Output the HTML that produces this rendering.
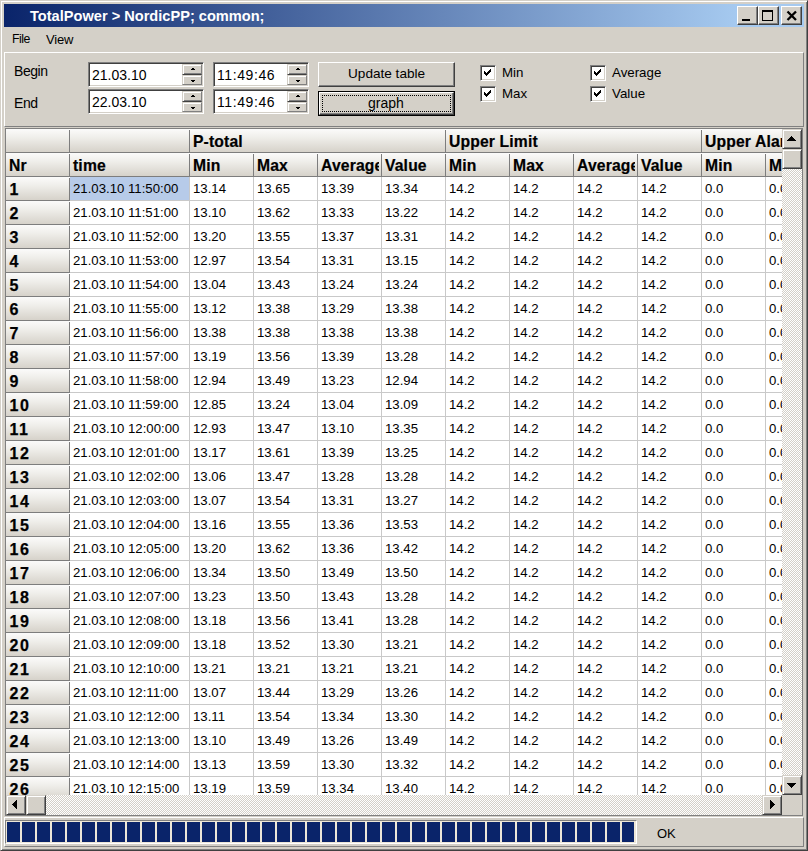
<!DOCTYPE html><html><head><meta charset="utf-8"><style>
*{margin:0;padding:0;box-sizing:border-box}
html,body{width:808px;height:851px;overflow:hidden;background:#d4d0c8;font-family:"Liberation Sans",sans-serif;color:#000}
.a{position:absolute}
.t{position:absolute;white-space:pre;line-height:1}
.fx{position:absolute;background:linear-gradient(#fbfbfa,#f0efeb 35%,#d6d2ca)}
.dl{position:absolute;background:#c9c9c9}
.fl{position:absolute;background:#7d7d7d}
.btn{position:absolute;background:#d4d0c8;border-style:solid;border-width:1px;border-color:#fff #404040 #404040 #fff;box-shadow:inset -1px -1px #808080}
.sbb{position:absolute;background:#d4d0c8;border-style:solid;border-width:1px;border-color:#d4d0c8 #404040 #404040 #d4d0c8;box-shadow:inset 1px 1px #fff,inset -1px -1px #808080}
.chk{position:absolute;width:16px;height:16px;background:#fff;border-style:solid;border-width:1px;border-color:#808080 #fff #fff #808080;box-shadow:inset 1px 1px #404040,inset -1px -1px #d4d0c8}
.ed{position:absolute;background:#fff;border-style:solid;border-width:1px;border-color:#808080 #fff #fff #808080;box-shadow:inset 1px 1px #404040,inset -1px -1px #d4d0c8}
.spn{position:absolute;background:#d4d0c8;border-style:solid;border-width:1px;border-color:#fff #404040 #404040 #fff;box-shadow:inset -1px -1px #808080}
</style></head><body><div class="a" style="left:0;top:0;width:808px;height:851px;border-style:solid;border-width:1px;border-color:#d4d0c8 #404040 #404040 #d4d0c8;box-shadow:inset 1px 1px #fff,inset -1px -1px #808080"></div>
<div class="a" style="left:4px;top:4px;width:800px;height:23px;background:linear-gradient(to right,#0a246a,#a6caf0 92%)"></div>
<div class="t" style="left:30px;top:9.2px;font-size:14.6px;font-weight:bold;color:#fff">TotalPower &gt; NordicPP; common;</div>
<div class="btn" style="left:737px;top:6px;width:21px;height:19px"></div>
<div class="btn" style="left:758px;top:6px;width:21px;height:19px"></div>
<div class="btn" style="left:781px;top:6px;width:21px;height:19px"></div>
<div class="a" style="left:742px;top:19px;width:8px;height:2px;background:#000"></div>
<div class="a" style="left:762px;top:10px;width:11px;height:11px;border:1px solid #000;border-top-width:2px"></div>
<svg class="a" style="left:786px;top:10px" width="12" height="12" viewBox="0 0 12 12"><path d="M1.5 1.5L10 10M10 1.5L1.5 10" stroke="#000" stroke-width="2.3" fill="none"/></svg>
<div class="t" style="left:12px;top:33px;font-size:12.3px;letter-spacing:-0.5px">File</div>
<div class="t" style="left:46px;top:33px;font-size:13px;letter-spacing:-0.2px">View</div>
<div class="a" style="left:4px;top:52px;width:800px;height:75px;border-style:solid;border-width:1px;border-color:#fff #808080 #808080 #fff"></div>
<div class="t" style="left:14px;top:63.7px;font-size:14px;letter-spacing:-0.45px">Begin</div>
<div class="t" style="left:14px;top:95.7px;font-size:14px;letter-spacing:-0.45px">End</div>
<div class="ed" style="left:88px;top:62px;width:116px;height:25px"></div>
<div class="t" style="left:92px;top:68px;font-size:14px">21.03.10</div>
<div class="a" style="left:182px;top:64px;width:20px;height:11px;background:#d4d0c8;border-style:solid;border-width:1px;border-color:#d4d0c8 #808080 #404040 #d4d0c8;box-shadow:inset 1px 1px #fff,inset 0 -1px #808080"></div>
<div class="a" style="left:182px;top:75px;width:20px;height:10px;background:#d4d0c8;border-style:solid;border-width:1px;border-color:#d4d0c8 #808080 #808080 #d4d0c8;box-shadow:inset 1px 1px #fff"></div>
<div class="a" style="left:192px;top:68px;width:2px;height:1px;background:#000"></div><div class="a" style="left:191px;top:69px;width:4px;height:1px;background:#000"></div>
<div class="a" style="left:191px;top:80px;width:4px;height:1px;background:#000"></div><div class="a" style="left:192px;top:81px;width:2px;height:1px;background:#000"></div>
<div class="ed" style="left:213px;top:62px;width:96px;height:25px"></div>
<div class="t" style="left:217px;top:68px;font-size:14px;letter-spacing:0.6px">11:49:46</div>
<div class="a" style="left:287px;top:64px;width:20px;height:11px;background:#d4d0c8;border-style:solid;border-width:1px;border-color:#d4d0c8 #808080 #404040 #d4d0c8;box-shadow:inset 1px 1px #fff,inset 0 -1px #808080"></div>
<div class="a" style="left:287px;top:75px;width:20px;height:10px;background:#d4d0c8;border-style:solid;border-width:1px;border-color:#d4d0c8 #808080 #808080 #d4d0c8;box-shadow:inset 1px 1px #fff"></div>
<div class="a" style="left:297px;top:68px;width:2px;height:1px;background:#000"></div><div class="a" style="left:296px;top:69px;width:4px;height:1px;background:#000"></div>
<div class="a" style="left:296px;top:80px;width:4px;height:1px;background:#000"></div><div class="a" style="left:297px;top:81px;width:2px;height:1px;background:#000"></div>
<div class="ed" style="left:88px;top:89px;width:116px;height:25px"></div>
<div class="t" style="left:92px;top:95px;font-size:14px">22.03.10</div>
<div class="a" style="left:182px;top:91px;width:20px;height:11px;background:#d4d0c8;border-style:solid;border-width:1px;border-color:#d4d0c8 #808080 #404040 #d4d0c8;box-shadow:inset 1px 1px #fff,inset 0 -1px #808080"></div>
<div class="a" style="left:182px;top:102px;width:20px;height:10px;background:#d4d0c8;border-style:solid;border-width:1px;border-color:#d4d0c8 #808080 #808080 #d4d0c8;box-shadow:inset 1px 1px #fff"></div>
<div class="a" style="left:192px;top:95px;width:2px;height:1px;background:#000"></div><div class="a" style="left:191px;top:96px;width:4px;height:1px;background:#000"></div>
<div class="a" style="left:191px;top:107px;width:4px;height:1px;background:#000"></div><div class="a" style="left:192px;top:108px;width:2px;height:1px;background:#000"></div>
<div class="ed" style="left:213px;top:89px;width:96px;height:25px"></div>
<div class="t" style="left:217px;top:95px;font-size:14px;letter-spacing:0.6px">11:49:46</div>
<div class="a" style="left:287px;top:91px;width:20px;height:11px;background:#d4d0c8;border-style:solid;border-width:1px;border-color:#d4d0c8 #808080 #404040 #d4d0c8;box-shadow:inset 1px 1px #fff,inset 0 -1px #808080"></div>
<div class="a" style="left:287px;top:102px;width:20px;height:10px;background:#d4d0c8;border-style:solid;border-width:1px;border-color:#d4d0c8 #808080 #808080 #d4d0c8;box-shadow:inset 1px 1px #fff"></div>
<div class="a" style="left:297px;top:95px;width:2px;height:1px;background:#000"></div><div class="a" style="left:296px;top:96px;width:4px;height:1px;background:#000"></div>
<div class="a" style="left:296px;top:107px;width:4px;height:1px;background:#000"></div><div class="a" style="left:297px;top:108px;width:2px;height:1px;background:#000"></div>
<div class="btn" style="left:318px;top:62px;width:137px;height:25px"></div>
<div class="t" style="left:348px;top:67px;font-size:13.6px">Update table</div>
<div class="a" style="left:318px;top:91px;width:137px;height:25px;background:#d4d0c8;border:1px solid #000"></div>
<div class="btn" style="left:319px;top:92px;width:135px;height:23px"></div>
<div class="a" style="left:322px;top:95px;width:129px;height:17px;border:1px dotted #000"></div>
<div class="t" style="left:368px;top:96px;font-size:14px">graph</div>
<div class="chk" style="left:480px;top:65px"></div>
<div class="a" style="left:484px;top:71px;width:1px;height:3px;background:#000"></div><div class="a" style="left:485px;top:72px;width:1px;height:3px;background:#000"></div><div class="a" style="left:486px;top:73px;width:1px;height:3px;background:#000"></div><div class="a" style="left:487px;top:72px;width:1px;height:3px;background:#000"></div><div class="a" style="left:488px;top:71px;width:1px;height:3px;background:#000"></div><div class="a" style="left:489px;top:70px;width:1px;height:3px;background:#000"></div><div class="a" style="left:490px;top:69px;width:1px;height:3px;background:#000"></div>
<div class="t" style="left:502px;top:66px;font-size:13.3px">Min</div>
<div class="chk" style="left:480px;top:86px"></div>
<div class="a" style="left:484px;top:92px;width:1px;height:3px;background:#000"></div><div class="a" style="left:485px;top:93px;width:1px;height:3px;background:#000"></div><div class="a" style="left:486px;top:94px;width:1px;height:3px;background:#000"></div><div class="a" style="left:487px;top:93px;width:1px;height:3px;background:#000"></div><div class="a" style="left:488px;top:92px;width:1px;height:3px;background:#000"></div><div class="a" style="left:489px;top:91px;width:1px;height:3px;background:#000"></div><div class="a" style="left:490px;top:90px;width:1px;height:3px;background:#000"></div>
<div class="t" style="left:502px;top:87px;font-size:13.3px">Max</div>
<div class="chk" style="left:590px;top:65px"></div>
<div class="a" style="left:594px;top:71px;width:1px;height:3px;background:#000"></div><div class="a" style="left:595px;top:72px;width:1px;height:3px;background:#000"></div><div class="a" style="left:596px;top:73px;width:1px;height:3px;background:#000"></div><div class="a" style="left:597px;top:72px;width:1px;height:3px;background:#000"></div><div class="a" style="left:598px;top:71px;width:1px;height:3px;background:#000"></div><div class="a" style="left:599px;top:70px;width:1px;height:3px;background:#000"></div><div class="a" style="left:600px;top:69px;width:1px;height:3px;background:#000"></div>
<div class="t" style="left:612px;top:66px;font-size:13.3px">Average</div>
<div class="chk" style="left:590px;top:86px"></div>
<div class="a" style="left:594px;top:92px;width:1px;height:3px;background:#000"></div><div class="a" style="left:595px;top:93px;width:1px;height:3px;background:#000"></div><div class="a" style="left:596px;top:94px;width:1px;height:3px;background:#000"></div><div class="a" style="left:597px;top:93px;width:1px;height:3px;background:#000"></div><div class="a" style="left:598px;top:92px;width:1px;height:3px;background:#000"></div><div class="a" style="left:599px;top:91px;width:1px;height:3px;background:#000"></div><div class="a" style="left:600px;top:90px;width:1px;height:3px;background:#000"></div>
<div class="t" style="left:612px;top:87px;font-size:13.3px">Value</div>
<div class="a" style="left:5px;top:128px;width:798px;height:688px;border:1px solid #808080;background:#fff"></div>
<div class="a" style="left:6px;top:129px;width:776px;height:666px;overflow:hidden"><div class="fx" style="left:0px;top:24px;width:63px;height:23px"></div><div class="fx" style="left:64px;top:24px;width:119px;height:23px"></div><div class="fx" style="left:184px;top:24px;width:63px;height:23px"></div><div class="fx" style="left:248px;top:24px;width:63px;height:23px"></div><div class="fx" style="left:312px;top:24px;width:63px;height:23px"></div><div class="fx" style="left:376px;top:24px;width:63px;height:23px"></div><div class="fx" style="left:440px;top:24px;width:63px;height:23px"></div><div class="fx" style="left:504px;top:24px;width:63px;height:23px"></div><div class="fx" style="left:568px;top:24px;width:63px;height:23px"></div><div class="fx" style="left:632px;top:24px;width:63px;height:23px"></div><div class="fx" style="left:696px;top:24px;width:63px;height:23px"></div><div class="fx" style="left:760px;top:24px;width:63px;height:23px"></div><div class="fx" style="left:0px;top:48px;width:63px;height:23px"></div><div class="a" style="left:64px;top:48px;width:119px;height:23px;background:#b7cbe9"></div><div class="fx" style="left:0px;top:72px;width:63px;height:23px"></div><div class="fx" style="left:0px;top:96px;width:63px;height:23px"></div><div class="fx" style="left:0px;top:120px;width:63px;height:23px"></div><div class="fx" style="left:0px;top:144px;width:63px;height:23px"></div><div class="fx" style="left:0px;top:168px;width:63px;height:23px"></div><div class="fx" style="left:0px;top:192px;width:63px;height:23px"></div><div class="fx" style="left:0px;top:216px;width:63px;height:23px"></div><div class="fx" style="left:0px;top:240px;width:63px;height:23px"></div><div class="fx" style="left:0px;top:264px;width:63px;height:23px"></div><div class="fx" style="left:0px;top:288px;width:63px;height:23px"></div><div class="fx" style="left:0px;top:312px;width:63px;height:23px"></div><div class="fx" style="left:0px;top:336px;width:63px;height:23px"></div><div class="fx" style="left:0px;top:360px;width:63px;height:23px"></div><div class="fx" style="left:0px;top:384px;width:63px;height:23px"></div><div class="fx" style="left:0px;top:408px;width:63px;height:23px"></div><div class="fx" style="left:0px;top:432px;width:63px;height:23px"></div><div class="fx" style="left:0px;top:456px;width:63px;height:23px"></div><div class="fx" style="left:0px;top:480px;width:63px;height:23px"></div><div class="fx" style="left:0px;top:504px;width:63px;height:23px"></div><div class="fx" style="left:0px;top:528px;width:63px;height:23px"></div><div class="fx" style="left:0px;top:552px;width:63px;height:23px"></div><div class="fx" style="left:0px;top:576px;width:63px;height:23px"></div><div class="fx" style="left:0px;top:600px;width:63px;height:23px"></div><div class="fx" style="left:0px;top:624px;width:63px;height:23px"></div><div class="fx" style="left:0px;top:648px;width:63px;height:23px"></div><div class="fx" style="left:0px;top:0px;width:63px;height:23px"></div><div class="fx" style="left:64px;top:0px;width:119px;height:23px"></div><div class="fx" style="left:184px;top:0px;width:255px;height:23px"></div><div class="fx" style="left:440px;top:0px;width:255px;height:23px"></div><div class="fx" style="left:696px;top:0px;width:127px;height:23px"></div><div class="fl" style="left:0;top:23px;width:796px;height:1px"></div><div class="fl" style="left:0;top:47px;width:796px;height:1px"></div><div class="fl" style="left:0;top:71px;width:64px;height:1px"></div><div class="dl" style="left:64px;top:71px;width:732px;height:1px"></div><div class="fl" style="left:0;top:95px;width:64px;height:1px"></div><div class="dl" style="left:64px;top:95px;width:732px;height:1px"></div><div class="fl" style="left:0;top:119px;width:64px;height:1px"></div><div class="dl" style="left:64px;top:119px;width:732px;height:1px"></div><div class="fl" style="left:0;top:143px;width:64px;height:1px"></div><div class="dl" style="left:64px;top:143px;width:732px;height:1px"></div><div class="fl" style="left:0;top:167px;width:64px;height:1px"></div><div class="dl" style="left:64px;top:167px;width:732px;height:1px"></div><div class="fl" style="left:0;top:191px;width:64px;height:1px"></div><div class="dl" style="left:64px;top:191px;width:732px;height:1px"></div><div class="fl" style="left:0;top:215px;width:64px;height:1px"></div><div class="dl" style="left:64px;top:215px;width:732px;height:1px"></div><div class="fl" style="left:0;top:239px;width:64px;height:1px"></div><div class="dl" style="left:64px;top:239px;width:732px;height:1px"></div><div class="fl" style="left:0;top:263px;width:64px;height:1px"></div><div class="dl" style="left:64px;top:263px;width:732px;height:1px"></div><div class="fl" style="left:0;top:287px;width:64px;height:1px"></div><div class="dl" style="left:64px;top:287px;width:732px;height:1px"></div><div class="fl" style="left:0;top:311px;width:64px;height:1px"></div><div class="dl" style="left:64px;top:311px;width:732px;height:1px"></div><div class="fl" style="left:0;top:335px;width:64px;height:1px"></div><div class="dl" style="left:64px;top:335px;width:732px;height:1px"></div><div class="fl" style="left:0;top:359px;width:64px;height:1px"></div><div class="dl" style="left:64px;top:359px;width:732px;height:1px"></div><div class="fl" style="left:0;top:383px;width:64px;height:1px"></div><div class="dl" style="left:64px;top:383px;width:732px;height:1px"></div><div class="fl" style="left:0;top:407px;width:64px;height:1px"></div><div class="dl" style="left:64px;top:407px;width:732px;height:1px"></div><div class="fl" style="left:0;top:431px;width:64px;height:1px"></div><div class="dl" style="left:64px;top:431px;width:732px;height:1px"></div><div class="fl" style="left:0;top:455px;width:64px;height:1px"></div><div class="dl" style="left:64px;top:455px;width:732px;height:1px"></div><div class="fl" style="left:0;top:479px;width:64px;height:1px"></div><div class="dl" style="left:64px;top:479px;width:732px;height:1px"></div><div class="fl" style="left:0;top:503px;width:64px;height:1px"></div><div class="dl" style="left:64px;top:503px;width:732px;height:1px"></div><div class="fl" style="left:0;top:527px;width:64px;height:1px"></div><div class="dl" style="left:64px;top:527px;width:732px;height:1px"></div><div class="fl" style="left:0;top:551px;width:64px;height:1px"></div><div class="dl" style="left:64px;top:551px;width:732px;height:1px"></div><div class="fl" style="left:0;top:575px;width:64px;height:1px"></div><div class="dl" style="left:64px;top:575px;width:732px;height:1px"></div><div class="fl" style="left:0;top:599px;width:64px;height:1px"></div><div class="dl" style="left:64px;top:599px;width:732px;height:1px"></div><div class="fl" style="left:0;top:623px;width:64px;height:1px"></div><div class="dl" style="left:64px;top:623px;width:732px;height:1px"></div><div class="fl" style="left:0;top:647px;width:64px;height:1px"></div><div class="dl" style="left:64px;top:647px;width:732px;height:1px"></div><div class="fl" style="left:0;top:671px;width:64px;height:1px"></div><div class="dl" style="left:64px;top:671px;width:732px;height:1px"></div><div class="fl" style="left:63px;top:1px;width:1px;height:23px"></div><div class="fl" style="left:63px;top:25px;width:1px;height:23px"></div><div class="fl" style="left:63px;top:49px;width:1px;height:23px"></div><div class="fl" style="left:63px;top:73px;width:1px;height:23px"></div><div class="fl" style="left:63px;top:97px;width:1px;height:23px"></div><div class="fl" style="left:63px;top:121px;width:1px;height:23px"></div><div class="fl" style="left:63px;top:145px;width:1px;height:23px"></div><div class="fl" style="left:63px;top:169px;width:1px;height:23px"></div><div class="fl" style="left:63px;top:193px;width:1px;height:23px"></div><div class="fl" style="left:63px;top:217px;width:1px;height:23px"></div><div class="fl" style="left:63px;top:241px;width:1px;height:23px"></div><div class="fl" style="left:63px;top:265px;width:1px;height:23px"></div><div class="fl" style="left:63px;top:289px;width:1px;height:23px"></div><div class="fl" style="left:63px;top:313px;width:1px;height:23px"></div><div class="fl" style="left:63px;top:337px;width:1px;height:23px"></div><div class="fl" style="left:63px;top:361px;width:1px;height:23px"></div><div class="fl" style="left:63px;top:385px;width:1px;height:23px"></div><div class="fl" style="left:63px;top:409px;width:1px;height:23px"></div><div class="fl" style="left:63px;top:433px;width:1px;height:23px"></div><div class="fl" style="left:63px;top:457px;width:1px;height:23px"></div><div class="fl" style="left:63px;top:481px;width:1px;height:23px"></div><div class="fl" style="left:63px;top:505px;width:1px;height:23px"></div><div class="fl" style="left:63px;top:529px;width:1px;height:23px"></div><div class="fl" style="left:63px;top:553px;width:1px;height:23px"></div><div class="fl" style="left:63px;top:577px;width:1px;height:23px"></div><div class="fl" style="left:63px;top:601px;width:1px;height:23px"></div><div class="fl" style="left:63px;top:625px;width:1px;height:23px"></div><div class="fl" style="left:63px;top:649px;width:1px;height:23px"></div><div class="fl" style="left:183px;top:1px;width:1px;height:22px"></div><div class="fl" style="left:183px;top:25px;width:1px;height:23px"></div><div class="dl" style="left:183px;top:48px;width:1px;height:640px"></div><div class="fl" style="left:247px;top:25px;width:1px;height:23px"></div><div class="dl" style="left:247px;top:48px;width:1px;height:640px"></div><div class="fl" style="left:311px;top:25px;width:1px;height:23px"></div><div class="dl" style="left:311px;top:48px;width:1px;height:640px"></div><div class="fl" style="left:375px;top:25px;width:1px;height:23px"></div><div class="dl" style="left:375px;top:48px;width:1px;height:640px"></div><div class="fl" style="left:439px;top:1px;width:1px;height:22px"></div><div class="fl" style="left:439px;top:25px;width:1px;height:23px"></div><div class="dl" style="left:439px;top:48px;width:1px;height:640px"></div><div class="fl" style="left:503px;top:25px;width:1px;height:23px"></div><div class="dl" style="left:503px;top:48px;width:1px;height:640px"></div><div class="fl" style="left:567px;top:25px;width:1px;height:23px"></div><div class="dl" style="left:567px;top:48px;width:1px;height:640px"></div><div class="fl" style="left:631px;top:25px;width:1px;height:23px"></div><div class="dl" style="left:631px;top:48px;width:1px;height:640px"></div><div class="fl" style="left:695px;top:1px;width:1px;height:22px"></div><div class="fl" style="left:695px;top:25px;width:1px;height:23px"></div><div class="dl" style="left:695px;top:48px;width:1px;height:640px"></div><div class="fl" style="left:759px;top:25px;width:1px;height:23px"></div><div class="dl" style="left:759px;top:48px;width:1px;height:640px"></div><div class="fl" style="left:823px;top:25px;width:1px;height:23px"></div><div class="dl" style="left:823px;top:48px;width:1px;height:640px"></div><div class="t" style="left:187px;top:4.9px;font-size:15.7px;letter-spacing:0.15px;font-weight:bold;-webkit-text-stroke:0.2px #000">P-total</div><div class="t" style="left:443px;top:4.9px;font-size:15.7px;letter-spacing:0.15px;font-weight:bold;-webkit-text-stroke:0.2px #000">Upper Limit</div><div class="t" style="left:699px;top:4.9px;font-size:15.7px;letter-spacing:0.15px;font-weight:bold;-webkit-text-stroke:0.2px #000">Upper Alarm</div><div class="t" style="left:0px;width:61px;overflow:hidden;padding-left:3px;top:28.9px;font-size:15.7px;letter-spacing:0.15px;font-weight:bold;-webkit-text-stroke:0.2px #000">Nr</div><div class="t" style="left:64px;width:117px;overflow:hidden;padding-left:3px;top:28.9px;font-size:15.7px;letter-spacing:0.15px;font-weight:bold;-webkit-text-stroke:0.2px #000">time</div><div class="t" style="left:184px;width:61px;overflow:hidden;padding-left:3px;top:28.9px;font-size:15.7px;letter-spacing:0.15px;font-weight:bold;-webkit-text-stroke:0.2px #000">Min</div><div class="t" style="left:248px;width:61px;overflow:hidden;padding-left:3px;top:28.9px;font-size:15.7px;letter-spacing:0.15px;font-weight:bold;-webkit-text-stroke:0.2px #000">Max</div><div class="t" style="left:312px;width:61px;overflow:hidden;padding-left:3px;top:28.9px;font-size:15.7px;letter-spacing:0.15px;font-weight:bold;-webkit-text-stroke:0.2px #000">Average</div><div class="t" style="left:376px;width:61px;overflow:hidden;padding-left:3px;top:28.9px;font-size:15.7px;letter-spacing:0.15px;font-weight:bold;-webkit-text-stroke:0.2px #000">Value</div><div class="t" style="left:440px;width:61px;overflow:hidden;padding-left:3px;top:28.9px;font-size:15.7px;letter-spacing:0.15px;font-weight:bold;-webkit-text-stroke:0.2px #000">Min</div><div class="t" style="left:504px;width:61px;overflow:hidden;padding-left:3px;top:28.9px;font-size:15.7px;letter-spacing:0.15px;font-weight:bold;-webkit-text-stroke:0.2px #000">Max</div><div class="t" style="left:568px;width:61px;overflow:hidden;padding-left:3px;top:28.9px;font-size:15.7px;letter-spacing:0.15px;font-weight:bold;-webkit-text-stroke:0.2px #000">Average</div><div class="t" style="left:632px;width:61px;overflow:hidden;padding-left:3px;top:28.9px;font-size:15.7px;letter-spacing:0.15px;font-weight:bold;-webkit-text-stroke:0.2px #000">Value</div><div class="t" style="left:696px;width:61px;overflow:hidden;padding-left:3px;top:28.9px;font-size:15.7px;letter-spacing:0.15px;font-weight:bold;-webkit-text-stroke:0.2px #000">Min</div><div class="t" style="left:760px;width:61px;overflow:hidden;padding-left:3px;top:28.9px;font-size:15.7px;letter-spacing:0.15px;font-weight:bold;-webkit-text-stroke:0.2px #000">Max</div><div class="t" style="left:3.6px;top:53px;font-size:16px;letter-spacing:1.4px;font-weight:bold;-webkit-text-stroke:0.25px #000">1</div><div class="t" style="left:67px;top:53px;font-size:13.2px">21.03.10 11:50:00</div><div class="t" style="left:187px;top:53px;font-size:13.2px">13.14</div><div class="t" style="left:251px;top:53px;font-size:13.2px">13.65</div><div class="t" style="left:315px;top:53px;font-size:13.2px">13.39</div><div class="t" style="left:379px;top:53px;font-size:13.2px">13.34</div><div class="t" style="left:443px;top:53px;font-size:13.2px">14.2</div><div class="t" style="left:507px;top:53px;font-size:13.2px">14.2</div><div class="t" style="left:571px;top:53px;font-size:13.2px">14.2</div><div class="t" style="left:635px;top:53px;font-size:13.2px">14.2</div><div class="t" style="left:699px;top:53px;font-size:13.2px">0.0</div><div class="t" style="left:763px;top:53px;font-size:13.2px">0.0</div><div class="t" style="left:3.6px;top:77px;font-size:16px;letter-spacing:1.4px;font-weight:bold;-webkit-text-stroke:0.25px #000">2</div><div class="t" style="left:67px;top:77px;font-size:13.2px">21.03.10 11:51:00</div><div class="t" style="left:187px;top:77px;font-size:13.2px">13.10</div><div class="t" style="left:251px;top:77px;font-size:13.2px">13.62</div><div class="t" style="left:315px;top:77px;font-size:13.2px">13.33</div><div class="t" style="left:379px;top:77px;font-size:13.2px">13.22</div><div class="t" style="left:443px;top:77px;font-size:13.2px">14.2</div><div class="t" style="left:507px;top:77px;font-size:13.2px">14.2</div><div class="t" style="left:571px;top:77px;font-size:13.2px">14.2</div><div class="t" style="left:635px;top:77px;font-size:13.2px">14.2</div><div class="t" style="left:699px;top:77px;font-size:13.2px">0.0</div><div class="t" style="left:763px;top:77px;font-size:13.2px">0.0</div><div class="t" style="left:3.6px;top:101px;font-size:16px;letter-spacing:1.4px;font-weight:bold;-webkit-text-stroke:0.25px #000">3</div><div class="t" style="left:67px;top:101px;font-size:13.2px">21.03.10 11:52:00</div><div class="t" style="left:187px;top:101px;font-size:13.2px">13.20</div><div class="t" style="left:251px;top:101px;font-size:13.2px">13.55</div><div class="t" style="left:315px;top:101px;font-size:13.2px">13.37</div><div class="t" style="left:379px;top:101px;font-size:13.2px">13.31</div><div class="t" style="left:443px;top:101px;font-size:13.2px">14.2</div><div class="t" style="left:507px;top:101px;font-size:13.2px">14.2</div><div class="t" style="left:571px;top:101px;font-size:13.2px">14.2</div><div class="t" style="left:635px;top:101px;font-size:13.2px">14.2</div><div class="t" style="left:699px;top:101px;font-size:13.2px">0.0</div><div class="t" style="left:763px;top:101px;font-size:13.2px">0.0</div><div class="t" style="left:3.6px;top:125px;font-size:16px;letter-spacing:1.4px;font-weight:bold;-webkit-text-stroke:0.25px #000">4</div><div class="t" style="left:67px;top:125px;font-size:13.2px">21.03.10 11:53:00</div><div class="t" style="left:187px;top:125px;font-size:13.2px">12.97</div><div class="t" style="left:251px;top:125px;font-size:13.2px">13.54</div><div class="t" style="left:315px;top:125px;font-size:13.2px">13.31</div><div class="t" style="left:379px;top:125px;font-size:13.2px">13.15</div><div class="t" style="left:443px;top:125px;font-size:13.2px">14.2</div><div class="t" style="left:507px;top:125px;font-size:13.2px">14.2</div><div class="t" style="left:571px;top:125px;font-size:13.2px">14.2</div><div class="t" style="left:635px;top:125px;font-size:13.2px">14.2</div><div class="t" style="left:699px;top:125px;font-size:13.2px">0.0</div><div class="t" style="left:763px;top:125px;font-size:13.2px">0.0</div><div class="t" style="left:3.6px;top:149px;font-size:16px;letter-spacing:1.4px;font-weight:bold;-webkit-text-stroke:0.25px #000">5</div><div class="t" style="left:67px;top:149px;font-size:13.2px">21.03.10 11:54:00</div><div class="t" style="left:187px;top:149px;font-size:13.2px">13.04</div><div class="t" style="left:251px;top:149px;font-size:13.2px">13.43</div><div class="t" style="left:315px;top:149px;font-size:13.2px">13.24</div><div class="t" style="left:379px;top:149px;font-size:13.2px">13.24</div><div class="t" style="left:443px;top:149px;font-size:13.2px">14.2</div><div class="t" style="left:507px;top:149px;font-size:13.2px">14.2</div><div class="t" style="left:571px;top:149px;font-size:13.2px">14.2</div><div class="t" style="left:635px;top:149px;font-size:13.2px">14.2</div><div class="t" style="left:699px;top:149px;font-size:13.2px">0.0</div><div class="t" style="left:763px;top:149px;font-size:13.2px">0.0</div><div class="t" style="left:3.6px;top:173px;font-size:16px;letter-spacing:1.4px;font-weight:bold;-webkit-text-stroke:0.25px #000">6</div><div class="t" style="left:67px;top:173px;font-size:13.2px">21.03.10 11:55:00</div><div class="t" style="left:187px;top:173px;font-size:13.2px">13.12</div><div class="t" style="left:251px;top:173px;font-size:13.2px">13.38</div><div class="t" style="left:315px;top:173px;font-size:13.2px">13.29</div><div class="t" style="left:379px;top:173px;font-size:13.2px">13.38</div><div class="t" style="left:443px;top:173px;font-size:13.2px">14.2</div><div class="t" style="left:507px;top:173px;font-size:13.2px">14.2</div><div class="t" style="left:571px;top:173px;font-size:13.2px">14.2</div><div class="t" style="left:635px;top:173px;font-size:13.2px">14.2</div><div class="t" style="left:699px;top:173px;font-size:13.2px">0.0</div><div class="t" style="left:763px;top:173px;font-size:13.2px">0.0</div><div class="t" style="left:3.6px;top:197px;font-size:16px;letter-spacing:1.4px;font-weight:bold;-webkit-text-stroke:0.25px #000">7</div><div class="t" style="left:67px;top:197px;font-size:13.2px">21.03.10 11:56:00</div><div class="t" style="left:187px;top:197px;font-size:13.2px">13.38</div><div class="t" style="left:251px;top:197px;font-size:13.2px">13.38</div><div class="t" style="left:315px;top:197px;font-size:13.2px">13.38</div><div class="t" style="left:379px;top:197px;font-size:13.2px">13.38</div><div class="t" style="left:443px;top:197px;font-size:13.2px">14.2</div><div class="t" style="left:507px;top:197px;font-size:13.2px">14.2</div><div class="t" style="left:571px;top:197px;font-size:13.2px">14.2</div><div class="t" style="left:635px;top:197px;font-size:13.2px">14.2</div><div class="t" style="left:699px;top:197px;font-size:13.2px">0.0</div><div class="t" style="left:763px;top:197px;font-size:13.2px">0.0</div><div class="t" style="left:3.6px;top:221px;font-size:16px;letter-spacing:1.4px;font-weight:bold;-webkit-text-stroke:0.25px #000">8</div><div class="t" style="left:67px;top:221px;font-size:13.2px">21.03.10 11:57:00</div><div class="t" style="left:187px;top:221px;font-size:13.2px">13.19</div><div class="t" style="left:251px;top:221px;font-size:13.2px">13.56</div><div class="t" style="left:315px;top:221px;font-size:13.2px">13.39</div><div class="t" style="left:379px;top:221px;font-size:13.2px">13.28</div><div class="t" style="left:443px;top:221px;font-size:13.2px">14.2</div><div class="t" style="left:507px;top:221px;font-size:13.2px">14.2</div><div class="t" style="left:571px;top:221px;font-size:13.2px">14.2</div><div class="t" style="left:635px;top:221px;font-size:13.2px">14.2</div><div class="t" style="left:699px;top:221px;font-size:13.2px">0.0</div><div class="t" style="left:763px;top:221px;font-size:13.2px">0.0</div><div class="t" style="left:3.6px;top:245px;font-size:16px;letter-spacing:1.4px;font-weight:bold;-webkit-text-stroke:0.25px #000">9</div><div class="t" style="left:67px;top:245px;font-size:13.2px">21.03.10 11:58:00</div><div class="t" style="left:187px;top:245px;font-size:13.2px">12.94</div><div class="t" style="left:251px;top:245px;font-size:13.2px">13.49</div><div class="t" style="left:315px;top:245px;font-size:13.2px">13.23</div><div class="t" style="left:379px;top:245px;font-size:13.2px">12.94</div><div class="t" style="left:443px;top:245px;font-size:13.2px">14.2</div><div class="t" style="left:507px;top:245px;font-size:13.2px">14.2</div><div class="t" style="left:571px;top:245px;font-size:13.2px">14.2</div><div class="t" style="left:635px;top:245px;font-size:13.2px">14.2</div><div class="t" style="left:699px;top:245px;font-size:13.2px">0.0</div><div class="t" style="left:763px;top:245px;font-size:13.2px">0.0</div><div class="t" style="left:3.6px;top:269px;font-size:16px;letter-spacing:1.4px;font-weight:bold;-webkit-text-stroke:0.25px #000">10</div><div class="t" style="left:67px;top:269px;font-size:13.2px">21.03.10 11:59:00</div><div class="t" style="left:187px;top:269px;font-size:13.2px">12.85</div><div class="t" style="left:251px;top:269px;font-size:13.2px">13.24</div><div class="t" style="left:315px;top:269px;font-size:13.2px">13.04</div><div class="t" style="left:379px;top:269px;font-size:13.2px">13.09</div><div class="t" style="left:443px;top:269px;font-size:13.2px">14.2</div><div class="t" style="left:507px;top:269px;font-size:13.2px">14.2</div><div class="t" style="left:571px;top:269px;font-size:13.2px">14.2</div><div class="t" style="left:635px;top:269px;font-size:13.2px">14.2</div><div class="t" style="left:699px;top:269px;font-size:13.2px">0.0</div><div class="t" style="left:763px;top:269px;font-size:13.2px">0.0</div><div class="t" style="left:3.6px;top:293px;font-size:16px;letter-spacing:1.4px;font-weight:bold;-webkit-text-stroke:0.25px #000">11</div><div class="t" style="left:67px;top:293px;font-size:13.2px">21.03.10 12:00:00</div><div class="t" style="left:187px;top:293px;font-size:13.2px">12.93</div><div class="t" style="left:251px;top:293px;font-size:13.2px">13.47</div><div class="t" style="left:315px;top:293px;font-size:13.2px">13.10</div><div class="t" style="left:379px;top:293px;font-size:13.2px">13.35</div><div class="t" style="left:443px;top:293px;font-size:13.2px">14.2</div><div class="t" style="left:507px;top:293px;font-size:13.2px">14.2</div><div class="t" style="left:571px;top:293px;font-size:13.2px">14.2</div><div class="t" style="left:635px;top:293px;font-size:13.2px">14.2</div><div class="t" style="left:699px;top:293px;font-size:13.2px">0.0</div><div class="t" style="left:763px;top:293px;font-size:13.2px">0.0</div><div class="t" style="left:3.6px;top:317px;font-size:16px;letter-spacing:1.4px;font-weight:bold;-webkit-text-stroke:0.25px #000">12</div><div class="t" style="left:67px;top:317px;font-size:13.2px">21.03.10 12:01:00</div><div class="t" style="left:187px;top:317px;font-size:13.2px">13.17</div><div class="t" style="left:251px;top:317px;font-size:13.2px">13.61</div><div class="t" style="left:315px;top:317px;font-size:13.2px">13.39</div><div class="t" style="left:379px;top:317px;font-size:13.2px">13.25</div><div class="t" style="left:443px;top:317px;font-size:13.2px">14.2</div><div class="t" style="left:507px;top:317px;font-size:13.2px">14.2</div><div class="t" style="left:571px;top:317px;font-size:13.2px">14.2</div><div class="t" style="left:635px;top:317px;font-size:13.2px">14.2</div><div class="t" style="left:699px;top:317px;font-size:13.2px">0.0</div><div class="t" style="left:763px;top:317px;font-size:13.2px">0.0</div><div class="t" style="left:3.6px;top:341px;font-size:16px;letter-spacing:1.4px;font-weight:bold;-webkit-text-stroke:0.25px #000">13</div><div class="t" style="left:67px;top:341px;font-size:13.2px">21.03.10 12:02:00</div><div class="t" style="left:187px;top:341px;font-size:13.2px">13.06</div><div class="t" style="left:251px;top:341px;font-size:13.2px">13.47</div><div class="t" style="left:315px;top:341px;font-size:13.2px">13.28</div><div class="t" style="left:379px;top:341px;font-size:13.2px">13.28</div><div class="t" style="left:443px;top:341px;font-size:13.2px">14.2</div><div class="t" style="left:507px;top:341px;font-size:13.2px">14.2</div><div class="t" style="left:571px;top:341px;font-size:13.2px">14.2</div><div class="t" style="left:635px;top:341px;font-size:13.2px">14.2</div><div class="t" style="left:699px;top:341px;font-size:13.2px">0.0</div><div class="t" style="left:763px;top:341px;font-size:13.2px">0.0</div><div class="t" style="left:3.6px;top:365px;font-size:16px;letter-spacing:1.4px;font-weight:bold;-webkit-text-stroke:0.25px #000">14</div><div class="t" style="left:67px;top:365px;font-size:13.2px">21.03.10 12:03:00</div><div class="t" style="left:187px;top:365px;font-size:13.2px">13.07</div><div class="t" style="left:251px;top:365px;font-size:13.2px">13.54</div><div class="t" style="left:315px;top:365px;font-size:13.2px">13.31</div><div class="t" style="left:379px;top:365px;font-size:13.2px">13.27</div><div class="t" style="left:443px;top:365px;font-size:13.2px">14.2</div><div class="t" style="left:507px;top:365px;font-size:13.2px">14.2</div><div class="t" style="left:571px;top:365px;font-size:13.2px">14.2</div><div class="t" style="left:635px;top:365px;font-size:13.2px">14.2</div><div class="t" style="left:699px;top:365px;font-size:13.2px">0.0</div><div class="t" style="left:763px;top:365px;font-size:13.2px">0.0</div><div class="t" style="left:3.6px;top:389px;font-size:16px;letter-spacing:1.4px;font-weight:bold;-webkit-text-stroke:0.25px #000">15</div><div class="t" style="left:67px;top:389px;font-size:13.2px">21.03.10 12:04:00</div><div class="t" style="left:187px;top:389px;font-size:13.2px">13.16</div><div class="t" style="left:251px;top:389px;font-size:13.2px">13.55</div><div class="t" style="left:315px;top:389px;font-size:13.2px">13.36</div><div class="t" style="left:379px;top:389px;font-size:13.2px">13.53</div><div class="t" style="left:443px;top:389px;font-size:13.2px">14.2</div><div class="t" style="left:507px;top:389px;font-size:13.2px">14.2</div><div class="t" style="left:571px;top:389px;font-size:13.2px">14.2</div><div class="t" style="left:635px;top:389px;font-size:13.2px">14.2</div><div class="t" style="left:699px;top:389px;font-size:13.2px">0.0</div><div class="t" style="left:763px;top:389px;font-size:13.2px">0.0</div><div class="t" style="left:3.6px;top:413px;font-size:16px;letter-spacing:1.4px;font-weight:bold;-webkit-text-stroke:0.25px #000">16</div><div class="t" style="left:67px;top:413px;font-size:13.2px">21.03.10 12:05:00</div><div class="t" style="left:187px;top:413px;font-size:13.2px">13.20</div><div class="t" style="left:251px;top:413px;font-size:13.2px">13.62</div><div class="t" style="left:315px;top:413px;font-size:13.2px">13.36</div><div class="t" style="left:379px;top:413px;font-size:13.2px">13.42</div><div class="t" style="left:443px;top:413px;font-size:13.2px">14.2</div><div class="t" style="left:507px;top:413px;font-size:13.2px">14.2</div><div class="t" style="left:571px;top:413px;font-size:13.2px">14.2</div><div class="t" style="left:635px;top:413px;font-size:13.2px">14.2</div><div class="t" style="left:699px;top:413px;font-size:13.2px">0.0</div><div class="t" style="left:763px;top:413px;font-size:13.2px">0.0</div><div class="t" style="left:3.6px;top:437px;font-size:16px;letter-spacing:1.4px;font-weight:bold;-webkit-text-stroke:0.25px #000">17</div><div class="t" style="left:67px;top:437px;font-size:13.2px">21.03.10 12:06:00</div><div class="t" style="left:187px;top:437px;font-size:13.2px">13.34</div><div class="t" style="left:251px;top:437px;font-size:13.2px">13.50</div><div class="t" style="left:315px;top:437px;font-size:13.2px">13.49</div><div class="t" style="left:379px;top:437px;font-size:13.2px">13.50</div><div class="t" style="left:443px;top:437px;font-size:13.2px">14.2</div><div class="t" style="left:507px;top:437px;font-size:13.2px">14.2</div><div class="t" style="left:571px;top:437px;font-size:13.2px">14.2</div><div class="t" style="left:635px;top:437px;font-size:13.2px">14.2</div><div class="t" style="left:699px;top:437px;font-size:13.2px">0.0</div><div class="t" style="left:763px;top:437px;font-size:13.2px">0.0</div><div class="t" style="left:3.6px;top:461px;font-size:16px;letter-spacing:1.4px;font-weight:bold;-webkit-text-stroke:0.25px #000">18</div><div class="t" style="left:67px;top:461px;font-size:13.2px">21.03.10 12:07:00</div><div class="t" style="left:187px;top:461px;font-size:13.2px">13.23</div><div class="t" style="left:251px;top:461px;font-size:13.2px">13.50</div><div class="t" style="left:315px;top:461px;font-size:13.2px">13.43</div><div class="t" style="left:379px;top:461px;font-size:13.2px">13.28</div><div class="t" style="left:443px;top:461px;font-size:13.2px">14.2</div><div class="t" style="left:507px;top:461px;font-size:13.2px">14.2</div><div class="t" style="left:571px;top:461px;font-size:13.2px">14.2</div><div class="t" style="left:635px;top:461px;font-size:13.2px">14.2</div><div class="t" style="left:699px;top:461px;font-size:13.2px">0.0</div><div class="t" style="left:763px;top:461px;font-size:13.2px">0.0</div><div class="t" style="left:3.6px;top:485px;font-size:16px;letter-spacing:1.4px;font-weight:bold;-webkit-text-stroke:0.25px #000">19</div><div class="t" style="left:67px;top:485px;font-size:13.2px">21.03.10 12:08:00</div><div class="t" style="left:187px;top:485px;font-size:13.2px">13.18</div><div class="t" style="left:251px;top:485px;font-size:13.2px">13.56</div><div class="t" style="left:315px;top:485px;font-size:13.2px">13.41</div><div class="t" style="left:379px;top:485px;font-size:13.2px">13.28</div><div class="t" style="left:443px;top:485px;font-size:13.2px">14.2</div><div class="t" style="left:507px;top:485px;font-size:13.2px">14.2</div><div class="t" style="left:571px;top:485px;font-size:13.2px">14.2</div><div class="t" style="left:635px;top:485px;font-size:13.2px">14.2</div><div class="t" style="left:699px;top:485px;font-size:13.2px">0.0</div><div class="t" style="left:763px;top:485px;font-size:13.2px">0.0</div><div class="t" style="left:3.6px;top:509px;font-size:16px;letter-spacing:1.4px;font-weight:bold;-webkit-text-stroke:0.25px #000">20</div><div class="t" style="left:67px;top:509px;font-size:13.2px">21.03.10 12:09:00</div><div class="t" style="left:187px;top:509px;font-size:13.2px">13.18</div><div class="t" style="left:251px;top:509px;font-size:13.2px">13.52</div><div class="t" style="left:315px;top:509px;font-size:13.2px">13.30</div><div class="t" style="left:379px;top:509px;font-size:13.2px">13.21</div><div class="t" style="left:443px;top:509px;font-size:13.2px">14.2</div><div class="t" style="left:507px;top:509px;font-size:13.2px">14.2</div><div class="t" style="left:571px;top:509px;font-size:13.2px">14.2</div><div class="t" style="left:635px;top:509px;font-size:13.2px">14.2</div><div class="t" style="left:699px;top:509px;font-size:13.2px">0.0</div><div class="t" style="left:763px;top:509px;font-size:13.2px">0.0</div><div class="t" style="left:3.6px;top:533px;font-size:16px;letter-spacing:1.4px;font-weight:bold;-webkit-text-stroke:0.25px #000">21</div><div class="t" style="left:67px;top:533px;font-size:13.2px">21.03.10 12:10:00</div><div class="t" style="left:187px;top:533px;font-size:13.2px">13.21</div><div class="t" style="left:251px;top:533px;font-size:13.2px">13.21</div><div class="t" style="left:315px;top:533px;font-size:13.2px">13.21</div><div class="t" style="left:379px;top:533px;font-size:13.2px">13.21</div><div class="t" style="left:443px;top:533px;font-size:13.2px">14.2</div><div class="t" style="left:507px;top:533px;font-size:13.2px">14.2</div><div class="t" style="left:571px;top:533px;font-size:13.2px">14.2</div><div class="t" style="left:635px;top:533px;font-size:13.2px">14.2</div><div class="t" style="left:699px;top:533px;font-size:13.2px">0.0</div><div class="t" style="left:763px;top:533px;font-size:13.2px">0.0</div><div class="t" style="left:3.6px;top:557px;font-size:16px;letter-spacing:1.4px;font-weight:bold;-webkit-text-stroke:0.25px #000">22</div><div class="t" style="left:67px;top:557px;font-size:13.2px">21.03.10 12:11:00</div><div class="t" style="left:187px;top:557px;font-size:13.2px">13.07</div><div class="t" style="left:251px;top:557px;font-size:13.2px">13.44</div><div class="t" style="left:315px;top:557px;font-size:13.2px">13.29</div><div class="t" style="left:379px;top:557px;font-size:13.2px">13.26</div><div class="t" style="left:443px;top:557px;font-size:13.2px">14.2</div><div class="t" style="left:507px;top:557px;font-size:13.2px">14.2</div><div class="t" style="left:571px;top:557px;font-size:13.2px">14.2</div><div class="t" style="left:635px;top:557px;font-size:13.2px">14.2</div><div class="t" style="left:699px;top:557px;font-size:13.2px">0.0</div><div class="t" style="left:763px;top:557px;font-size:13.2px">0.0</div><div class="t" style="left:3.6px;top:581px;font-size:16px;letter-spacing:1.4px;font-weight:bold;-webkit-text-stroke:0.25px #000">23</div><div class="t" style="left:67px;top:581px;font-size:13.2px">21.03.10 12:12:00</div><div class="t" style="left:187px;top:581px;font-size:13.2px">13.11</div><div class="t" style="left:251px;top:581px;font-size:13.2px">13.54</div><div class="t" style="left:315px;top:581px;font-size:13.2px">13.34</div><div class="t" style="left:379px;top:581px;font-size:13.2px">13.30</div><div class="t" style="left:443px;top:581px;font-size:13.2px">14.2</div><div class="t" style="left:507px;top:581px;font-size:13.2px">14.2</div><div class="t" style="left:571px;top:581px;font-size:13.2px">14.2</div><div class="t" style="left:635px;top:581px;font-size:13.2px">14.2</div><div class="t" style="left:699px;top:581px;font-size:13.2px">0.0</div><div class="t" style="left:763px;top:581px;font-size:13.2px">0.0</div><div class="t" style="left:3.6px;top:605px;font-size:16px;letter-spacing:1.4px;font-weight:bold;-webkit-text-stroke:0.25px #000">24</div><div class="t" style="left:67px;top:605px;font-size:13.2px">21.03.10 12:13:00</div><div class="t" style="left:187px;top:605px;font-size:13.2px">13.10</div><div class="t" style="left:251px;top:605px;font-size:13.2px">13.49</div><div class="t" style="left:315px;top:605px;font-size:13.2px">13.26</div><div class="t" style="left:379px;top:605px;font-size:13.2px">13.49</div><div class="t" style="left:443px;top:605px;font-size:13.2px">14.2</div><div class="t" style="left:507px;top:605px;font-size:13.2px">14.2</div><div class="t" style="left:571px;top:605px;font-size:13.2px">14.2</div><div class="t" style="left:635px;top:605px;font-size:13.2px">14.2</div><div class="t" style="left:699px;top:605px;font-size:13.2px">0.0</div><div class="t" style="left:763px;top:605px;font-size:13.2px">0.0</div><div class="t" style="left:3.6px;top:629px;font-size:16px;letter-spacing:1.4px;font-weight:bold;-webkit-text-stroke:0.25px #000">25</div><div class="t" style="left:67px;top:629px;font-size:13.2px">21.03.10 12:14:00</div><div class="t" style="left:187px;top:629px;font-size:13.2px">13.13</div><div class="t" style="left:251px;top:629px;font-size:13.2px">13.59</div><div class="t" style="left:315px;top:629px;font-size:13.2px">13.30</div><div class="t" style="left:379px;top:629px;font-size:13.2px">13.32</div><div class="t" style="left:443px;top:629px;font-size:13.2px">14.2</div><div class="t" style="left:507px;top:629px;font-size:13.2px">14.2</div><div class="t" style="left:571px;top:629px;font-size:13.2px">14.2</div><div class="t" style="left:635px;top:629px;font-size:13.2px">14.2</div><div class="t" style="left:699px;top:629px;font-size:13.2px">0.0</div><div class="t" style="left:763px;top:629px;font-size:13.2px">0.0</div><div class="t" style="left:3.6px;top:653px;font-size:16px;letter-spacing:1.4px;font-weight:bold;-webkit-text-stroke:0.25px #000">26</div><div class="t" style="left:67px;top:653px;font-size:13.2px">21.03.10 12:15:00</div><div class="t" style="left:187px;top:653px;font-size:13.2px">13.19</div><div class="t" style="left:251px;top:653px;font-size:13.2px">13.59</div><div class="t" style="left:315px;top:653px;font-size:13.2px">13.34</div><div class="t" style="left:379px;top:653px;font-size:13.2px">13.40</div><div class="t" style="left:443px;top:653px;font-size:13.2px">14.2</div><div class="t" style="left:507px;top:653px;font-size:13.2px">14.2</div><div class="t" style="left:571px;top:653px;font-size:13.2px">14.2</div><div class="t" style="left:635px;top:653px;font-size:13.2px">14.2</div><div class="t" style="left:699px;top:653px;font-size:13.2px">0.0</div><div class="t" style="left:763px;top:653px;font-size:13.2px">0.0</div></div>
<div class="a" style="left:782px;top:129px;width:20px;height:666px;background-color:#d4d0c8;background-image:repeating-conic-gradient(#fff 0 25%,#d4d0c8 0 50%);background-size:2px 2px"></div>
<div class="sbb" style="left:782px;top:129px;width:20px;height:20px"></div>
<div class="a" style="left:791px;top:136px;width:1px;height:1px;background:#000"></div><div class="a" style="left:790px;top:137px;width:3px;height:1px;background:#000"></div><div class="a" style="left:789px;top:138px;width:5px;height:1px;background:#000"></div><div class="a" style="left:788px;top:139px;width:7px;height:1px;background:#000"></div><div class="a" style="left:787px;top:140px;width:9px;height:1px;background:#000"></div>
<div class="sbb" style="left:782px;top:149px;width:20px;height:20px"></div>
<div class="sbb" style="left:782px;top:775px;width:20px;height:20px"></div>
<div class="a" style="left:787px;top:783px;width:9px;height:1px;background:#000"></div><div class="a" style="left:788px;top:784px;width:7px;height:1px;background:#000"></div><div class="a" style="left:789px;top:785px;width:5px;height:1px;background:#000"></div><div class="a" style="left:790px;top:786px;width:3px;height:1px;background:#000"></div><div class="a" style="left:791px;top:787px;width:1px;height:1px;background:#000"></div>
<div class="a" style="left:6px;top:795px;width:776px;height:20px;background-color:#d4d0c8;background-image:repeating-conic-gradient(#fff 0 25%,#d4d0c8 0 50%);background-size:2px 2px"></div>
<div class="sbb" style="left:6px;top:795px;width:20px;height:20px"></div>
<div class="a" style="left:12px;top:804px;width:1px;height:1px;background:#000"></div><div class="a" style="left:13px;top:803px;width:1px;height:3px;background:#000"></div><div class="a" style="left:14px;top:802px;width:1px;height:5px;background:#000"></div><div class="a" style="left:15px;top:801px;width:1px;height:7px;background:#000"></div><div class="a" style="left:16px;top:800px;width:1px;height:9px;background:#000"></div>
<div class="sbb" style="left:26px;top:795px;width:20px;height:20px"></div>
<div class="sbb" style="left:762px;top:795px;width:20px;height:20px"></div>
<div class="a" style="left:770px;top:800px;width:1px;height:9px;background:#000"></div><div class="a" style="left:771px;top:801px;width:1px;height:7px;background:#000"></div><div class="a" style="left:772px;top:802px;width:1px;height:5px;background:#000"></div><div class="a" style="left:773px;top:803px;width:1px;height:3px;background:#000"></div><div class="a" style="left:774px;top:804px;width:1px;height:1px;background:#000"></div>
<div class="a" style="left:782px;top:795px;width:20px;height:20px;background:#d4d0c8"></div>
<div class="a" style="left:4px;top:817px;width:800px;height:30px;border-style:solid;border-width:1px;border-color:#fff #808080 #808080 #fff"></div>
<div class="a" style="left:5px;top:820px;width:632px;height:24px;background:#ece6d8;border-style:solid;border-width:1px;border-color:#808080 #fff #fff #808080;overflow:hidden"><div class="a" style="left:1px;top:1px;width:13px;height:20px;background:#0a246a"></div><div class="a" style="left:16px;top:1px;width:13px;height:20px;background:#0a246a"></div><div class="a" style="left:31px;top:1px;width:13px;height:20px;background:#0a246a"></div><div class="a" style="left:46px;top:1px;width:13px;height:20px;background:#0a246a"></div><div class="a" style="left:61px;top:1px;width:13px;height:20px;background:#0a246a"></div><div class="a" style="left:76px;top:1px;width:13px;height:20px;background:#0a246a"></div><div class="a" style="left:91px;top:1px;width:13px;height:20px;background:#0a246a"></div><div class="a" style="left:106px;top:1px;width:13px;height:20px;background:#0a246a"></div><div class="a" style="left:121px;top:1px;width:13px;height:20px;background:#0a246a"></div><div class="a" style="left:136px;top:1px;width:13px;height:20px;background:#0a246a"></div><div class="a" style="left:151px;top:1px;width:13px;height:20px;background:#0a246a"></div><div class="a" style="left:166px;top:1px;width:13px;height:20px;background:#0a246a"></div><div class="a" style="left:181px;top:1px;width:13px;height:20px;background:#0a246a"></div><div class="a" style="left:196px;top:1px;width:13px;height:20px;background:#0a246a"></div><div class="a" style="left:211px;top:1px;width:13px;height:20px;background:#0a246a"></div><div class="a" style="left:226px;top:1px;width:13px;height:20px;background:#0a246a"></div><div class="a" style="left:241px;top:1px;width:13px;height:20px;background:#0a246a"></div><div class="a" style="left:256px;top:1px;width:13px;height:20px;background:#0a246a"></div><div class="a" style="left:271px;top:1px;width:13px;height:20px;background:#0a246a"></div><div class="a" style="left:286px;top:1px;width:13px;height:20px;background:#0a246a"></div><div class="a" style="left:301px;top:1px;width:13px;height:20px;background:#0a246a"></div><div class="a" style="left:316px;top:1px;width:13px;height:20px;background:#0a246a"></div><div class="a" style="left:331px;top:1px;width:13px;height:20px;background:#0a246a"></div><div class="a" style="left:346px;top:1px;width:13px;height:20px;background:#0a246a"></div><div class="a" style="left:361px;top:1px;width:13px;height:20px;background:#0a246a"></div><div class="a" style="left:376px;top:1px;width:13px;height:20px;background:#0a246a"></div><div class="a" style="left:391px;top:1px;width:13px;height:20px;background:#0a246a"></div><div class="a" style="left:406px;top:1px;width:13px;height:20px;background:#0a246a"></div><div class="a" style="left:421px;top:1px;width:13px;height:20px;background:#0a246a"></div><div class="a" style="left:436px;top:1px;width:13px;height:20px;background:#0a246a"></div><div class="a" style="left:451px;top:1px;width:13px;height:20px;background:#0a246a"></div><div class="a" style="left:466px;top:1px;width:13px;height:20px;background:#0a246a"></div><div class="a" style="left:481px;top:1px;width:13px;height:20px;background:#0a246a"></div><div class="a" style="left:496px;top:1px;width:13px;height:20px;background:#0a246a"></div><div class="a" style="left:511px;top:1px;width:13px;height:20px;background:#0a246a"></div><div class="a" style="left:526px;top:1px;width:13px;height:20px;background:#0a246a"></div><div class="a" style="left:541px;top:1px;width:13px;height:20px;background:#0a246a"></div><div class="a" style="left:556px;top:1px;width:13px;height:20px;background:#0a246a"></div><div class="a" style="left:571px;top:1px;width:13px;height:20px;background:#0a246a"></div><div class="a" style="left:586px;top:1px;width:13px;height:20px;background:#0a246a"></div><div class="a" style="left:601px;top:1px;width:13px;height:20px;background:#0a246a"></div><div class="a" style="left:616px;top:1px;width:12px;height:20px;background:#0a246a"></div></div>
<div class="t" style="left:657px;top:827px;font-size:13px">OK</div></body></html>
